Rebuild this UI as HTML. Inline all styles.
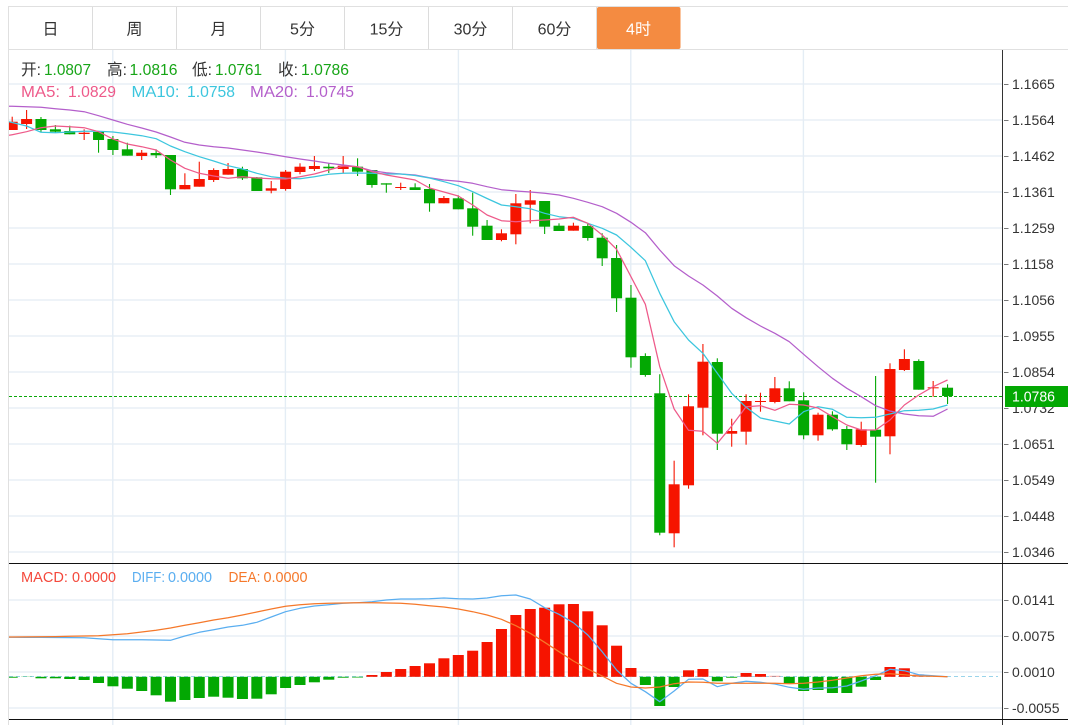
<!DOCTYPE html>
<html><head><meta charset="utf-8">
<style>
html,body{margin:0;padding:0;background:#fff;width:1068px;height:725px;overflow:hidden}
svg{position:absolute;left:0;top:0;display:block}
text{font-family:"Liberation Sans","Noto Sans CJK SC",sans-serif}
</style></head><body>
<svg id="s" width="1068" height="725" viewBox="0 0 1068 725" xmlns="http://www.w3.org/2000/svg">
<g id="grid"></g>
<path d="M9 396.5H1002" stroke="#0aa80a" stroke-width="1" stroke-dasharray="3 2" fill="none"/>
<path d="M9 676.5H998" stroke="#9ad4ea" stroke-width="1" stroke-dasharray="4 3" fill="none"/>
<g id="plot"></g>
<g id="ax"></g>
<g font-size="16">
<text x="21" y="75" fill="#333" textLength="20" lengthAdjust="spacingAndGlyphs">开:</text><text x="44" y="75" fill="#17a517" textLength="47" lengthAdjust="spacingAndGlyphs">1.0807</text>
<text x="107" y="75" fill="#333" textLength="20" lengthAdjust="spacingAndGlyphs">高:</text><text x="129.500" y="75" fill="#17a517" textLength="48" lengthAdjust="spacingAndGlyphs">1.0816</text>
<text x="192" y="75" fill="#333" textLength="20" lengthAdjust="spacingAndGlyphs">低:</text><text x="215" y="75" fill="#17a517" textLength="47" lengthAdjust="spacingAndGlyphs">1.0761</text>
<text x="278" y="75" fill="#333" textLength="20" lengthAdjust="spacingAndGlyphs">收:</text><text x="301" y="75" fill="#17a517" textLength="48" lengthAdjust="spacingAndGlyphs">1.0786</text>
<text x="21" y="97" fill="#ee5a8a" textLength="39" lengthAdjust="spacingAndGlyphs">MA5:</text><text x="68" y="97" fill="#ee5a8a" textLength="48" lengthAdjust="spacingAndGlyphs">1.0829</text>
<text x="131.500" y="97" fill="#3cc6de" textLength="48" lengthAdjust="spacingAndGlyphs">MA10:</text><text x="187" y="97" fill="#3cc6de" textLength="48" lengthAdjust="spacingAndGlyphs">1.0758</text>
<text x="250" y="97" fill="#b45fcb" textLength="48" lengthAdjust="spacingAndGlyphs">MA20:</text><text x="306" y="97" fill="#b45fcb" textLength="48" lengthAdjust="spacingAndGlyphs">1.0745</text>
</g>
<g font-size="15">
<text x="21" y="582" fill="#f4493c" textLength="47" lengthAdjust="spacingAndGlyphs">MACD:</text><text x="72" y="582" fill="#f4493c" textLength="44" lengthAdjust="spacingAndGlyphs">0.0000</text>
<text x="132" y="582" fill="#5aaef0" textLength="33" lengthAdjust="spacingAndGlyphs">DIFF:</text><text x="168" y="582" fill="#5aaef0" textLength="44" lengthAdjust="spacingAndGlyphs">0.0000</text>
<text x="228.500" y="582" fill="#f5782a" textLength="32" lengthAdjust="spacingAndGlyphs">DEA:</text><text x="263.500" y="582" fill="#f5782a" textLength="44" lengthAdjust="spacingAndGlyphs">0.0000</text>
</g>
<g id="tabs"></g>
</svg>
<script>
var NS="http://www.w3.org/2000/svg";
function el(p,n,a,t){var e=document.createElementNS(NS,n);for(var k in a)e.setAttribute(k,a[k]);if(t)e.textContent=t;document.getElementById(p).appendChild(e);return e}
var X=function(i){return 12.2+14.39*i};
/* grid */
[84,120,156,192,228,264,300,336,372,408,444,480,516,552,600,636,672,708].forEach(function(y){el('grid','path',{d:'M9 '+y+'H1002',stroke:'#e9eff5','stroke-width':1.5,fill:'none'})});
[112.8,285.4,458.4,630.8,803.4].forEach(function(x){el('grid','path',{d:'M'+x+' 50V725',stroke:'#e4edf5','stroke-width':1.4,fill:'none'})});
/* candles: color,top,bot,hi,lo */
var C="r 121.7 130 116.7 130|r 119 124 110 129|g 119 130 117 132|g 129.3 131.7 125 133|g 131 134.3 125.7 134.3|r 132.7 134 129.3 140|g 132 140 132 152.700|g 139 150 136 155|g 149.3 155.7 142.7 155.7|r 152.7 156 150 160|g 153 155.3 149.3 158|g 155 189.3 155 195|r 185 189.3 173.3 189.3|r 179 186.7 161.7 186.7|r 170 180 168.3 182|r 169 174.7 163 174.7|g 169 178.3 166.7 180|g 177.3 191 177 191|r 188.3 190.7 181 193.3|r 171.7 189 170 190.7|r 166.7 172 163.3 174.3|r 166 169 156 171|g 166.7 168.3 163.3 173|r 165.7 169 156 173.3|g 166.7 171.7 158.3 176|g 170 185 170 187.7|g 183.3 184.6 183.3 192.7|r 187 188 182.7 190|g 187.3 190 183.3 190|g 189 203.3 184 211.7|r 198 203.3 196 203.3|g 198.3 209.3 195.3 209.3|g 208.3 226.7 192.7 235.7|g 225.7 240 220 240|r 233.3 240 229.3 241.3|r 203.3 234.3 194 244.3|r 200.3 204.7 190 223.3|g 201 226.7 201 234|g 225.7 231 223.3 231|r 225.7 230.7 222.7 230.7|g 226 238 223.3 240.7|g 237.7 258.3 233.3 266|g 258 298.3 245 312|g 297.7 357.3 285 367.7|g 356 375 353.3 376.7|g 393.3 532.7 374.3 535.3|r 484.3 533.3 460.7 547.3|r 406.3 485.3 394.3 488.7|r 361.7 407.7 344 435.3|g 362 433.7 358.3 450|r 431 433.7 418.7 446.7|r 401 431.7 394.3 444.7|r 401 402 392.7 411.7|r 388.3 402 377 403.3|g 388.3 401.3 381.3 401.3|g 400.3 435.3 392.3 439.3|r 414.7 435.3 412.7 440.7|g 414.7 429.3 411.3 430.7|g 429 444.3 426 450|r 429.3 445 421.7 446.7|g 429.7 436.7 376 482.7|r 369 436.3 363.3 454.3|r 359 370 349.3 371|g 361 389.7 359.3 389.7|r 387.3 388.3 381 396.7|g 387.7 396 384.3 404".split('|');
C.forEach(function(s,i){var p=s.split(' '),c=p[0]=='r'?'#f61400':'#03a803',x=X(i),
 t=+p[1],b=+p[2],h=+p[3],l=+p[4],L=Math.max(9,x-5.5),R=x+5.5;
 if(x>9)el('plot','path',{d:'M'+x+' '+h+'V'+l,stroke:c,'stroke-width':1.1,fill:'none'});
 el('plot','rect',{x:L,y:t,width:R-L,height:Math.max(b-t,1),fill:c});
});
/* MACD bars: value = edge y; <676.5 is red */
var M=[677.7,677,678.3,678.3,679,680,683,686.3,688.7,691,695.3,701.7,700,698,696.7,697.7,699,698.7,694.3,688,685,682.3,679.7,677.7,677.5,675,672,669,666,663.3,658.3,655,650.7,642,629,615,609,607.7,604.3,604,611.3,625.3,645.7,668,685,706,687,670.3,669,681.3,677.7,673,674,675.8,683.3,691,690,693,693,686.7,680,667,668.3,674.3];
M.forEach(function(y,i){var x=X(i),L=Math.max(9,x-5.5),R=x+5.5,red=y<676.5;
 var o=(i==63||i==53)?0.4:1;
 el('plot','rect',{x:L,y:red?y:676.8,width:R-L,height:red?676.8-y:y-676.8,fill:red?'#f61400':'#03a803',opacity:o});
});
var clip=el('plot','clipPath',{id:'cl'});var cr=document.createElementNS(NS,'rect');cr.setAttribute('x',9);cr.setAttribute('y',50);cr.setAttribute('width',993);cr.setAttribute('height',675);clip.appendChild(cr);
el('plot','g',{'clip-path':'url(#cl)',id:'lines'});
function ln(a,c,s,w){var d='M9 '+s;a.forEach(function(y,i){d+='L'+X(i).toFixed(2)+' '+y});
 el('lines','path',{d:d,stroke:c,'stroke-width':w||1.25,fill:'none','stroke-linejoin':'round'})}
var P=[134.7,131.7,127.7,126,126.7,127.7,131.7,139,144,146.7,150,160,168.3,173.3,176,178.3,176.7,178,178.7,179,176.7,174,170,166,166.7,171.7,175,177.5,180,188,192,196,205,215,220.7,221.7,220.7,220,219,217.3,223.3,235,249.3,276.7,304.3,366.7,409,430.3,431.3,443.3,426,406.7,405.7,410.3,404.3,405,408,416.7,425,430,430,420,405,395,386.7,380];
var Q=[122.5,126,132.3,132.7,132,131.3,131.3,132,133.7,135.7,138.7,146,151.7,156.7,161,165.7,169,173.3,176.7,178.3,178.7,176.7,174.3,173.3,173,173.3,174,174,175.5,178,181.7,185.7,191.7,198.5,205,206.7,208.7,213.3,216.7,218.3,223.3,228.3,235,247.3,260.7,293.3,321.7,340,353.3,373.3,393.3,407.3,418,421,424,411.7,406.7,409.3,417.3,417.7,417.3,414,410.7,410.3,409,405];
var R=[106.3,106.7,107.3,108.7,110,111.7,115.7,120,124.3,128,132,137,142.3,145,146.7,148,150,152,154.3,156.7,159,161,163.3,165,166.7,170.7,172.7,174,175,177.7,180,181.3,183.3,186.7,189.7,191,192,193.3,195,198.3,202.3,206.7,213.3,222.3,232.7,250,265.7,276,285,296,308.3,317.7,326,333.3,341.7,354.3,366.7,378.3,388.3,396.7,405.7,411,414,415.7,416.3,409];
ln(R,'#b45fcb',106.3);ln(Q,'#3cc6de',121.7);ln(P,'#ee5a8a',135.3);
var D=[637.3,637.4,637.4,637.5,637.6,637.7,638.7,639.7,639.7,639.7,640,640.3,636,632.3,629.7,627,625.3,622.3,617,611.7,608.3,606,604.7,603.3,602.7,601.7,600,599,599,598.7,598,598.7,599,598,595.7,595,599,607.7,614.3,622.7,635,651.7,670,683.3,691.7,701.7,691,679.3,679,686.7,683.3,681.3,682.3,684,687.3,689.3,688,687.7,686,681,675.7,669.3,670.7,674.7,675.7,676.7];
var E=[637,636.9,636.8,636.6,636.3,636,635.7,634.7,633.7,632,630.3,628,625.3,622.7,620,617.7,615,612,609,606.3,604.7,603.7,603.3,603,602.7,602.7,603,603.3,604.3,605.7,607,609,611.7,615,619.3,625.7,633.3,642.3,651.7,661,669,676,683.3,687,688,687,683.7,682,682.3,683.3,683.3,683.3,683.3,683.3,683.7,683.3,682,680.3,678,675.7,674.3,673.700,674.7,676,676.3,676.7];
ln(D,'#5aaef0',637.3);ln(E,'#f5782a',637);
/* axes */
[[84,'1.1665'],[120,'1.1564'],[156,'1.1462'],[192,'1.1361'],[228,'1.1259'],[264,'1.1158'],[300,'1.1056'],[336,'1.0955'],[372,'1.0854'],[408,'1.0732'],[444,'1.0651'],[480,'1.0549'],[516,'1.0448'],[552,'1.0346'],[600,'0.0141'],[636,'0.0075'],[672,'0.0010'],[708,'-0.0055']].forEach(function(a){
 el('ax','path',{d:'M1004 '+(a[0]+.5)+'H1008.500',stroke:'#777','stroke-width':1,fill:'none'});
 el('ax','text',{x:1012,y:a[0]+5,'font-size':14,fill:'#333'},a[1]);
});
el('ax','path',{d:'M1002.500 50V725',stroke:'#333','stroke-width':1,fill:'none'});
el('ax','path',{d:'M9 563.500H1068M9 719.500H1068',stroke:'#111','stroke-width':1,fill:'none'});
el('ax','rect',{x:1005,y:386,width:63,height:21,fill:'#03a803'});
el('ax','text',{x:1012,y:401.500,'font-size':15,fill:'#fff',textLength:43,lengthAdjust:'spacingAndGlyphs'},'1.0786');
/* tabs */
el('tabs','path',{d:'M8.500 725V6.500H1068M9 49.500H1068',stroke:'#e0e0e0','stroke-width':1,fill:'none'});
['日','周','月','5分','15分','30分','60分','4时'].forEach(function(t,i){var x=8.5+84*i;
 if(i)el('tabs','path',{d:'M'+x+' 7V49',stroke:'#dcdcdc','stroke-width':1,fill:'none'});
 if(i==7)el('tabs','rect',{x:x+.5,y:7,width:83.5,height:42,rx:2,fill:'#f48b41'});
 el('tabs','text',{x:x+42,y:34.500,'font-size':16,fill:i==7?'#fff':'#333','text-anchor':'middle'},t);
});
</script>
</body></html>
